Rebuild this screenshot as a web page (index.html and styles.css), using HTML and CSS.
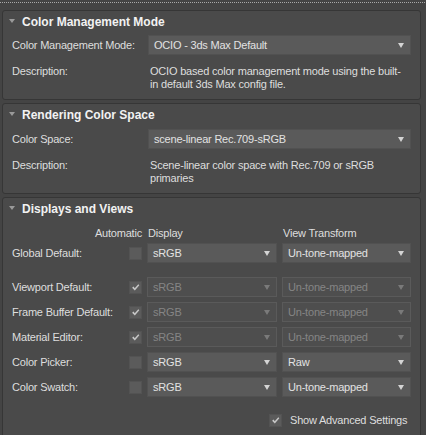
FILE: index.html
```html
<!DOCTYPE html>
<html>
<head>
<meta charset="utf-8">
<link rel="stylesheet" href="styles.css">
</head>
<body>
<div class="top-dots"></div>

<section class="panel p1">
  <div class="panel-head"><span class="tri"></span>Color Management Mode</div>
  <div class="panel-body">
    <div class="row">
      <span class="label">Color Management Mode:</span>
      <div class="select wide"><span>OCIO - 3ds Max Default</span><span class="arrow"></span></div>
    </div>
    <div class="row desc">
      <span class="label">Description:</span>
      <p>OCIO based color management mode using the built-<br>in default 3ds Max config file.</p>
    </div>
  </div>
</section>

<section class="panel p2">
  <div class="panel-head"><span class="tri"></span>Rendering Color Space</div>
  <div class="panel-body">
    <div class="row">
      <span class="label">Color Space:</span>
      <div class="select wide"><span>scene-linear Rec.709-sRGB</span><span class="arrow"></span></div>
    </div>
    <div class="row desc">
      <span class="label">Description:</span>
      <p>Scene-linear color space with Rec.709 or sRGB<br>primaries</p>
    </div>
  </div>
</section>

<section class="panel p3">
  <div class="panel-head"><span class="tri"></span>Displays and Views</div>
  <div class="panel-body grid-body">
    <div class="dv-row colhead">
      <span class="auto-h">Automatic</span>
      <span class="disp-h">Display</span>
      <span class="view-h">View Transform</span>
    </div>
    <div class="dv-row global">
      <span class="label">Global Default:</span>
      <span class="check"></span>
      <div class="select disp"><span>sRGB</span><span class="arrow"></span></div>
      <div class="select view"><span>Un-tone-mapped</span><span class="arrow"></span></div>
    </div>
    <div class="dv-list">
      <div class="dv-row">
        <span class="label">Viewport Default:</span>
        <span class="check on"><svg viewBox="0 0 13 13"><path d="M2.5 6.8 L4.2 5.4 L5.6 7.4 L9.8 2.6 L11 3.7 L5.7 10 Z"/></svg></span>
        <div class="select disp off"><span>sRGB</span><span class="arrow"></span></div>
        <div class="select view off"><span>Un-tone-mapped</span><span class="arrow"></span></div>
      </div>
      <div class="dv-row">
        <span class="label">Frame Buffer Default:</span>
        <span class="check on"><svg viewBox="0 0 13 13"><path d="M2.5 6.8 L4.2 5.4 L5.6 7.4 L9.8 2.6 L11 3.7 L5.7 10 Z"/></svg></span>
        <div class="select disp off"><span>sRGB</span><span class="arrow"></span></div>
        <div class="select view off"><span>Un-tone-mapped</span><span class="arrow"></span></div>
      </div>
      <div class="dv-row">
        <span class="label">Material Editor:</span>
        <span class="check on"><svg viewBox="0 0 13 13"><path d="M2.5 6.8 L4.2 5.4 L5.6 7.4 L9.8 2.6 L11 3.7 L5.7 10 Z"/></svg></span>
        <div class="select disp off"><span>sRGB</span><span class="arrow"></span></div>
        <div class="select view off"><span>Un-tone-mapped</span><span class="arrow"></span></div>
      </div>
      <div class="dv-row">
        <span class="label">Color Picker:</span>
        <span class="check"></span>
        <div class="select disp"><span>sRGB</span><span class="arrow"></span></div>
        <div class="select view"><span>Raw</span><span class="arrow"></span></div>
      </div>
      <div class="dv-row">
        <span class="label">Color Swatch:</span>
        <span class="check"></span>
        <div class="select disp"><span>sRGB</span><span class="arrow"></span></div>
        <div class="select view"><span>Un-tone-mapped</span><span class="arrow"></span></div>
      </div>
    </div>
    <div class="advanced">
      <span class="check on"><svg viewBox="0 0 13 13"><path d="M2.5 6.8 L4.2 5.4 L5.6 7.4 L9.8 2.6 L11 3.7 L5.7 10 Z"/></svg></span>
      <span class="adv-label">Show Advanced Settings</span>
    </div>
  </div>
</section>
</body>
</html>
```

FILE: styles.css
```css
html, body {
  margin: 0;
  padding: 0;
}
body {
  background: #444444;
  font-family: "Liberation Sans", Arial, sans-serif;
  font-size: 11px;
  letter-spacing: -0.2px;
  color: #dedede;
  overflow: hidden;
  height: 435px;
}
.top-dots {
  height: 1px;
  margin-top: 2px;
  margin-bottom: 7px;
  background-image: linear-gradient(to right, #a8a8a8 1px, transparent 1px);
  background-size: 2px 1px;
}
.panel {
  margin: 0 5px 3px 2px;
  background: #4a4a4a;
  border: 1px solid #363636;
  border-radius: 3px;
}
.panel-head {
  height: 21px;
  display: flex;
  align-items: center;
  padding-left: 6px;
  font-weight: bold;
  font-size: 12px;
  letter-spacing: 0;
  color: #f2f2f2;
}
.tri {
  width: 0;
  height: 0;
  border-left: 3px solid transparent;
  border-right: 3px solid transparent;
  border-top: 4px solid #9a9a9a;
  margin-right: 7px;
  margin-top: -2px;
}
.panel-body {
  padding: 3px 8px 8px 9px;
}
.row {
  display: flex;
  align-items: center;
}
.row .label {
  width: 136px;
  flex: none;
}
.row.desc {
  align-items: flex-start;
  margin-top: 10px;
}
.row.desc p {
  margin: 0 0 0 2px;
  line-height: 13px;
}
.select {
  height: 20px;
  box-sizing: border-box;
  background: #5a5a5a;
  border: 1px solid #515151;
  display: flex;
  align-items: center;
  justify-content: space-between;
  padding: 0 6px 0 5px;
  color: #e2e2e2;
}
.select.wide {
  width: 263px;
}
.arrow {
  width: 0;
  height: 0;
  border-left: 3.5px solid transparent;
  border-right: 3.5px solid transparent;
  border-top: 5px solid #d4d4d4;
}
.select.off {
  background: #4e4e4e;
  border-color: #5a5a5a;
  color: #858585;
}
.select.off .arrow {
  border-top-color: #7a7a7a;
}
.p2 .panel-head {
  height: 22px;
}
.p3 {
  padding-bottom: 20px;
}
.grid-body {
  padding-top: 0;
}
.dv-row {
  display: flex;
  align-items: center;
  height: 20px;
}
.dv-row .label {
  width: 117px;
  flex: none;
}
.check {
  width: 13px;
  height: 13px;
  box-sizing: border-box;
  background: #5b5b5b;
  border: 1px solid #535353;
  flex: none;
  display: flex;
  align-items: center;
  justify-content: center;
}
.check svg {
  width: 13px;
  height: 13px;
  fill: #c8c8c8;
}
.dv-row .select.disp {
  width: 130px;
  margin-left: 5px;
}
.dv-row .select.view {
  width: 129px;
  margin-left: 5px;
}
.colhead {
  height: 13px;
  margin-top: 7px;
  margin-bottom: 4px;
}
.auto-h {
  width: 130px;
  text-align: right;
  flex: none;
}
.disp-h {
  width: 135px;
  margin-left: 6px;
  flex: none;
}
.view-h {
  flex: none;
}
.dv-list {
  display: flex;
  flex-direction: column;
  gap: 5px;
  margin-top: 14px;
}
.advanced {
  display: flex;
  align-items: center;
  height: 20px;
  margin-top: 13px;
  padding-left: 257px;
}
.adv-label {
  margin-left: 8px;
}
```
